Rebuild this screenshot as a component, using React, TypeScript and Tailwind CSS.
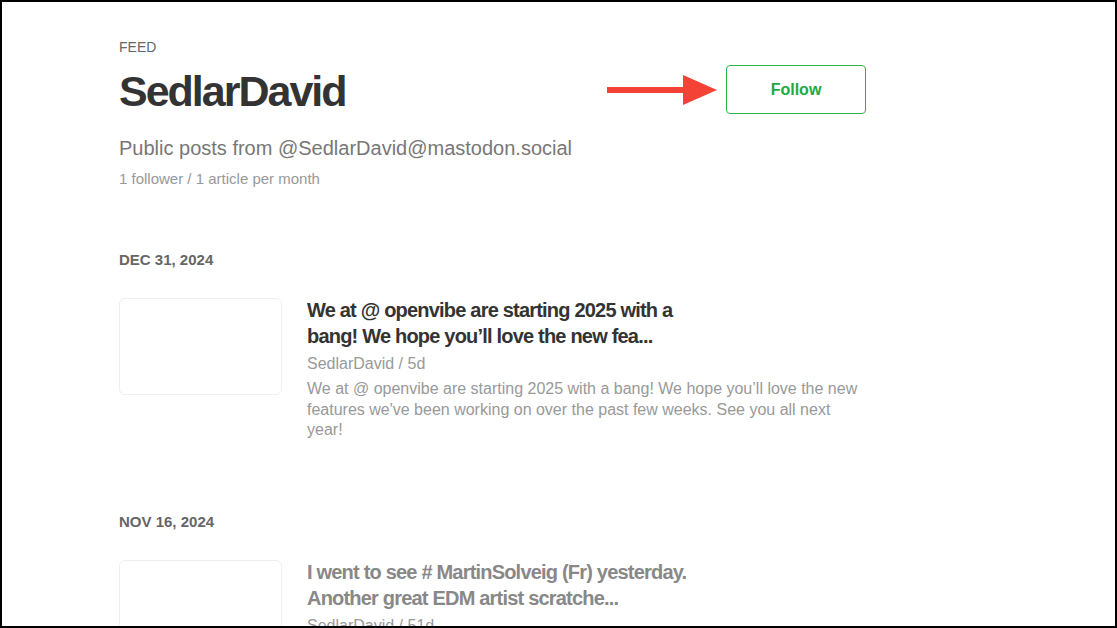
import React from 'react';

type Post = {
  date: string;
  title: string;
  author: string;
  age: string;
  excerpt: string;
  read?: boolean;
};

const posts: Post[] = [
  {
    date: 'DEC 31, 2024',
    title: 'We at @ openvibe are starting 2025 with a bang! We hope you\u2019ll love the new fea...',
    author: 'SedlarDavid',
    age: '5d',
    excerpt:
      "We at @ openvibe are starting 2025 with a bang! We hope you\u2019ll love the new features we've been working on over the past few weeks. See you all next year!",
  },
  {
    date: 'NOV 16, 2024',
    title: 'I went to see # MartinSolveig (Fr) yesterday. Another great EDM artist scratche...',
    author: 'SedlarDavid',
    age: '51d',
    excerpt: 'I went to see # MartinSolveig (Fr) yesterday. Another great EDM artist scratched off my list.',
    read: true,
  },
];

function Arrow() {
  return (
    <svg width="112" height="32" viewBox="0 0 112 32" className="absolute left-[488px] top-[73px]">
      <rect x="0" y="12" width="78" height="6" fill="#f44336" />
      <polygon points="76,0 110,15 76,30" fill="#f44336" />
    </svg>
  );
}

function PostItem({ post }: { post: Post }) {
  return (
    <section>
      <div className="text-[15px] leading-[20px] font-bold text-[#666]">{post.date}</div>
      <div className="mt-[28px] flex items-start gap-[25px]">
        <div className="w-[163px] h-[97px] shrink-0 rounded-[6px] border border-[#eeeeee] bg-white" />
        <div className="-mt-[1px] w-[559px]">
          <h2
            className={
              'max-w-[400px] text-[20px] leading-[26px] font-bold tracking-[-0.8px] ' +
              (post.read ? 'text-[#888]' : 'text-[#333]')
            }
          >
            {post.title}
          </h2>
          <div className="mt-[5px] text-[16px] leading-[20px] text-[#999]">
            {post.author} / {post.age}
          </div>
          <p className="mt-[5px] text-[16px] leading-[20.5px] text-[#999]">{post.excerpt}</p>
        </div>
      </div>
    </section>
  );
}

export default function App() {
  return (
    <div
      className="h-[628px] w-full overflow-hidden border-2 border-black bg-white"
      style={{ fontFamily: '"Liberation Sans", Arial, sans-serif' }}
    >
      <div className="ml-[117px] w-[747px]">
        <header className="relative pt-[35px]">
          <div className="text-[14px] leading-[20px] text-[#666]">FEED</div>
          <h1 className="mt-[9px] text-[43px] leading-[50px] font-bold tracking-[-2px] text-[#333]">
            SedlarDavid
          </h1>
          <p className="mt-[18px] text-[20px] leading-[28px] text-[#777]">
            Public posts from @SedlarDavid@mastodon.social
          </p>
          <p className="mt-[7px] text-[15px] leading-[20px] text-[#999]">1 follower / 1 article per month</p>

          <Arrow />
          <button className="absolute right-0 top-[63px] h-[49px] w-[140px] rounded-[4px] border border-[#2db34a] bg-white text-[16px] font-bold text-[#22a83f]">
            Follow
          </button>
        </header>

        <div className="mt-[61px] flex flex-col gap-[71px]">
          {posts.map((p) => (
            <PostItem key={p.date} post={p} />
          ))}
        </div>
      </div>
    </div>
  );
}
